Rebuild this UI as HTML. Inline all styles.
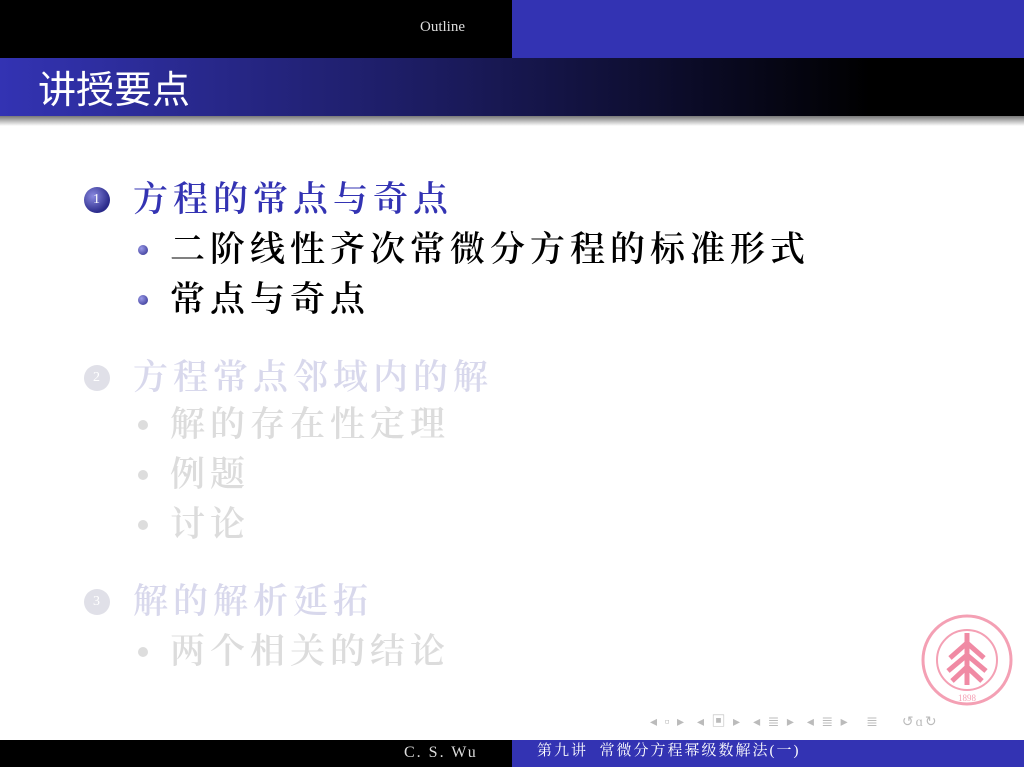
<!DOCTYPE html>
<html><head><meta charset="utf-8"><style>
*{margin:0;padding:0}
body{width:1024px;height:767px;position:relative;background:#fff;overflow:hidden;font-family:"Liberation Serif","Noto Serif CJK SC",serif}
.a{position:absolute;white-space:nowrap;line-height:1}
.cj{font-family:"Liberation Serif","Noto Serif CJK SC",serif;font-size:35px;letter-spacing:5px;font-weight:600}
.ball{position:absolute;border-radius:50%}
</style></head><body>
<div class="a" style="left:0;top:0;width:512px;height:58px;background:#000"></div>
<div class="a" style="left:512px;top:0;width:512px;height:58px;background:#3333b3"></div>
<div class="a" style="left:420px;top:20px;color:#ddd;font-size:15px">Outline</div>
<div class="a" style="left:0;top:58px;width:1024px;height:58px;background:linear-gradient(90deg,#3333b3,#1a1a5a 45%,#000 85%)"></div>
<div class="a" style="left:0;top:116px;width:1024px;height:10px;background:linear-gradient(#777,#fff)"></div>
<div class="a" style="left:38px;top:72px;color:#fff;font-size:38px;font-family:'Liberation Sans','Noto Sans CJK SC',sans-serif">讲授要点</div>

<div class="ball" style="left:84px;top:187px;width:26px;height:26px;background:radial-gradient(circle at 35% 35%,#8a8ae0,#2a2a8a 70%)"></div>
<div class="a" style="left:93px;top:193px;color:#fff;font-size:14px">1</div>
<div class="a cj" style="left:133px;top:182px;color:#3333b3">方程的常点与奇点</div>
<div class="ball" style="left:138px;top:245px;width:10px;height:10px;background:radial-gradient(circle at 35% 35%,#9a9ae8,#2a2a8a)"></div>
<div class="a cj" style="left:170px;top:232px;color:#000">二阶线性齐次常微分方程的标准形式</div>
<div class="ball" style="left:138px;top:295px;width:10px;height:10px;background:radial-gradient(circle at 35% 35%,#9a9ae8,#2a2a8a)"></div>
<div class="a cj" style="left:170px;top:282px;color:#000">常点与奇点</div>

<div class="ball" style="left:84px;top:365px;width:26px;height:26px;background:#e0e0e8"></div>
<div class="a" style="left:93px;top:371px;color:#fff;font-size:14px">2</div>
<div class="a cj" style="left:133px;top:360px;color:#d8d8ec">方程常点邻域内的解</div>
<div class="ball" style="left:138px;top:420px;width:10px;height:10px;background:#ddd"></div>
<div class="a cj" style="left:170px;top:407px;color:#dcdcdc">解的存在性定理</div>
<div class="ball" style="left:138px;top:470px;width:10px;height:10px;background:#ddd"></div>
<div class="a cj" style="left:170px;top:457px;color:#dcdcdc">例题</div>
<div class="ball" style="left:138px;top:520px;width:10px;height:10px;background:#ddd"></div>
<div class="a cj" style="left:170px;top:507px;color:#dcdcdc">讨论</div>

<div class="ball" style="left:84px;top:589px;width:26px;height:26px;background:#e0e0e8"></div>
<div class="a" style="left:93px;top:595px;color:#fff;font-size:14px">3</div>
<div class="a cj" style="left:133px;top:584px;color:#d8d8ec">解的解析延拓</div>
<div class="ball" style="left:138px;top:647px;width:10px;height:10px;background:#ddd"></div>
<div class="a cj" style="left:170px;top:634px;color:#dcdcdc">两个相关的结论</div>

<svg class="a" style="left:920px;top:613px" width="94" height="94" viewBox="0 0 94 94">
<circle cx="47" cy="47" r="44" fill="none" stroke="#f4a0b4" stroke-width="3"/>
<circle cx="47" cy="47" r="30" fill="none" stroke="#f4a0b4" stroke-width="2"/>
<path d="M47 20V72M47 30L30 45M47 30L64 45M47 42L28 58M47 42L66 58M47 54L32 68M47 54L62 68" stroke="#f08aa4" stroke-width="5" fill="none"/>
<text x="47" y="88" font-size="9" text-anchor="middle" fill="#f4a0b4">1898</text>
</svg>

<div class="a" style="left:650px;top:716px;color:#bbb;font-size:14px;letter-spacing:2px">◂ ▫ ▸ &nbsp;◂ ▣ ▸ &nbsp;◂ ≣ ▸ &nbsp;◂ ≣ ▸ &nbsp;&nbsp;≣ &nbsp;&nbsp;&nbsp;↺ɑ↻</div>

<div class="a" style="left:0;top:740px;width:512px;height:27px;background:#000"></div>
<div class="a" style="left:512px;top:740px;width:512px;height:27px;background:#3333b3"></div>
<div class="a" style="left:404px;top:745px;color:#ddd;font-size:16px;letter-spacing:2px">C. S. Wu</div>
<div class="a" style="left:537px;top:744px;color:#fff;font-size:15px;letter-spacing:2px;font-family:'Liberation Serif','Noto Serif CJK SC',serif">第九讲 &nbsp;常微分方程幂级数解法(一)</div>
</body></html>
